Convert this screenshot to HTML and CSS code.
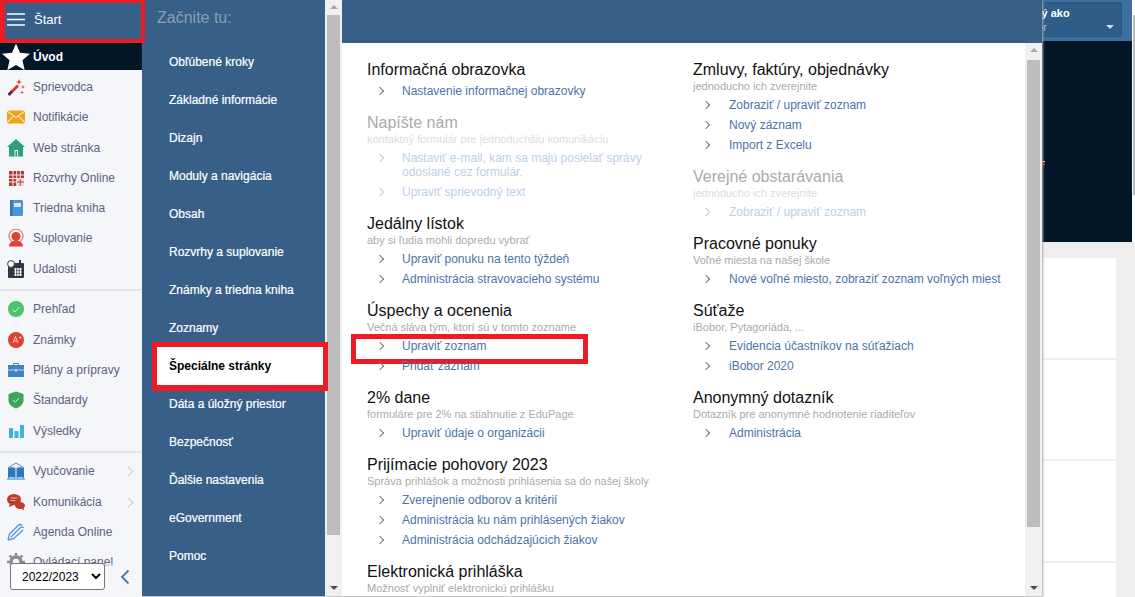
FILE: index.html
```html
<!DOCTYPE html>
<html lang="sk">
<head>
<meta charset="utf-8">
<title>EduPage</title>
<link rel="stylesheet" href="styles.css">
</head>
<body>
<div class="app">
  <aside class="side">
    <div class="side-head annotated-start">
      <svg class="burger" viewBox="0 0 18 13" width="18" height="13"><path d="M0 1h18M0 6.500h18M0 12h18" stroke="#fff" stroke-width="1.600"/></svg>
      <span>Štart</span>
    </div>
    <div class="intro">
      <svg viewBox="0 0 28 28" width="28" height="28"><path d="M14 .5l4 9.300 10 .9-7.600 6.600 2.300 9.800L14 22l-8.700 5.100 2.300-9.800L0 10.700l10-.9z" fill="#fff"/></svg>
      <span>Úvod</span>
    </div>
    <ul class="side-list">
      <li><svg viewBox="0 0 18 18"><path d="M2 16.500L11 7.500" stroke="#d8392b" stroke-width="3"/><path d="M1.500 17L5 13.500" stroke="#3a3a44" stroke-width="2.500"/><path d="M12 1l.8 2.200L15 4l-2.200.8L12 7l-.8-2.200L9 4l2.200-.8zM16 7l.5 1.500 1.500.5-1.500.5L16 11l-.5-1.500L14 9l1.500-.5zM15 12.500l.5 1.500 1.500.5-1.500.5-.5 1.500-.5-1.500-1.500-.5 1.500-.5z" fill="#d8392b"/></svg><span>Sprievodca</span></li>
      <li><svg viewBox="0 0 18 18"><rect y="2.500" width="18" height="13" fill="#f1a31c"/><path d="M0 3l9 6.500L18 3M0 15l6.500-7M18 15l-6.500-7" stroke="#fff" stroke-width="1" fill="none"/></svg><span>Notifikácie</span></li>
      <li><svg viewBox="0 0 18 18"><path d="M9 0L18 8h-2v9.500H2V8H0z" fill="#2f9d80"/><path d="M7.500 11h3.500v6.500H7.500z" fill="#e8f3f0"/><path d="M8.500 12h1.500v5.500H8.500z" fill="#2f9d80"/></svg><span>Web stránka</span></li>
      <li><svg viewBox="0 0 18 18"><rect x="2" y="2" width="15" height="15" fill="#b8352a"/><path d="M2 6h15M2 9.500h15M2 13h15M6 2v15M9.700 2v15M13.300 2v15" stroke="#fff" stroke-width=".9"/><rect x="10" y="10" width="7" height="7" fill="#f0d7d4"/><path d="M10 13h7M13.300 10v7" stroke="#b8352a" stroke-width=".9"/></svg><span>Rozvrhy Online</span></li>
      <li><svg viewBox="0 0 18 18"><rect x="3" y="1" width="13" height="16" rx="1.500" fill="#4a94dc"/><rect x="3" y="1" width="2.500" height="16" fill="#2f78bd"/><rect x="7" y="4" width="7" height="4" fill="#d9eafa"/></svg><span>Triedna kniha</span></li>
      <li><svg viewBox="0 0 18 18"><circle cx="9" cy="7" r="7" fill="none" stroke="#e0503f" stroke-width="1"/><circle cx="9" cy="7.500" r="4.500" fill="#e0402f"/><path d="M2 17.500c0-4 3-5.500 7-5.500s7 1.500 7 5.500z" fill="#e0402f"/></svg><span>Suplovanie</span></li>
      <li><svg viewBox="0 0 18 18"><rect x="1" y="3" width="16" height="15" rx="1" fill="#2c3644"/><path d="M7 9h8M7 12h8M7 15h8M8.500 8v8M11 8v8M13.500 8v8" stroke="#fff" stroke-width="1"/><circle cx="4" cy="4" r="3.400" fill="#fff" stroke="#2c3644"/><rect x="12" y="0" width="2" height="4" fill="#2c3644"/></svg><span>Udalosti</span></li>
    </ul>
    <ul class="side-list ruled">
      <li><svg viewBox="0 0 18 18"><circle cx="9" cy="9" r="8" fill="#47c56d"/><path d="M5.500 9.500l2.500 2.500 4.500-5" stroke="#d8f5e0" stroke-width="1" fill="none"/></svg><span>Prehľad</span></li>
      <li><svg viewBox="0 0 18 18"><circle cx="9" cy="9" r="8" fill="#e0402f"/><path d="M6 12l2.500-6.500L11 12M7 10h3M12 6.500h2.500M13.200 5.300v2.400" stroke="#f7c9c3" stroke-width="1" fill="none"/></svg><span>Známky</span></li>
      <li><svg viewBox="0 0 18 18"><rect x="1" y="4" width="16" height="12" fill="#3d85c6"/><path d="M6.500 4V2.500h5V4" stroke="#3d85c6" fill="none"/><path d="M1 9h16" stroke="#dcebf8" stroke-width=".8"/><rect x="8" y="8.500" width="2" height="2" fill="#dcebf8"/></svg><span>Plány a prípravy</span></li>
      <li><svg viewBox="0 0 18 18"><path d="M9 .5l7.500 2.500v6c0 4-3 7-7.500 8.500C4.500 16 1.500 13 1.500 9V3z" fill="#3ea457"/><path d="M6 9l2.200 2.200L12 7" stroke="#d6f0dc" stroke-width="1" fill="none"/></svg><span>Štandardy</span></li>
      <li><svg viewBox="0 0 18 18"><path d="M2 6h4v10H2zM7.500 9h4v7h-4zM13 3h4v13h-4z" fill="#3db5d8"/></svg><span>Výsledky</span></li>
    </ul>
    <ul class="side-list ruled">
      <li class="more"><svg viewBox="0 0 18 18"><path d="M1 6L9 1l8 5" stroke="#3d85c6" fill="none"/><path d="M1 6c2.500-1 5-1 7.500 0v10c-2.500-1-5-1-7.500 0zM9.500 6c2.500-1 5-1 7.500 0v10c-2.500-1-5-1-7.500 0z" fill="#2f78bd"/><path d="M0 17h18" stroke="#2f78bd"/></svg><span>Vyučovanie</span></li>
      <li class="more"><svg viewBox="0 0 18 18"><ellipse cx="7" cy="6.500" rx="7" ry="5.500" fill="#c0392b"/><path d="M3 10l-1 4 5-2z" fill="#c0392b"/><path d="M3.500 5h7M3.500 7.500h5" stroke="#f5d4d0" stroke-width=".8"/><ellipse cx="13" cy="12.500" rx="5" ry="3.500" fill="#c0392b"/><path d="M14 15l3 2.500-.5-4z" fill="#c0392b"/></svg><span>Komunikácia</span></li>
      <li><svg viewBox="0 0 18 18"><path d="M1 17l1.500-6L11 2.500c1.500-1.500 3-1 4 0M4 14L13 5c1.500-1.500 3-1 3.500 0M1 17l6-1.500L16 7" stroke="#4a94dc" stroke-width="1.300" fill="none"/></svg><span>Agenda Online</span></li>
      <li><svg viewBox="0 0 18 18"><circle cx="9" cy="9" r="5" fill="none" stroke="#8c8c8c" stroke-width="3.500"/><path d="M9 0v3M9 15v3M0 9h3M15 9h3M2.600 2.600l2.100 2.100M13.300 13.300l2.100 2.100M15.400 2.600l-2.100 2.100M4.700 13.300l-2.100 2.100" stroke="#8c8c8c" stroke-width="2.500"/></svg><span>Ovládací panel</span></li>
    </ul>
    <div class="year-bar">
      <select class="year"><option>2022/2023</option></select>
      <svg viewBox="0 0 10 16" width="10" height="16"><path d="M8.500 1.500L2 8l6.500 6.500" stroke="#4a78a5" stroke-width="1.800" fill="none"/></svg>
    </div>
  </aside>

  <main class="page">
    <div class="hero">
      <div class="topbar">
        <div class="user">
          <div class="user-name">Prihlásený ako</div>
          <div class="user-role"><span>Administrátor</span><i class="caret"></i></div>
        </div>
      </div>
      <div class="banner"><span class="banner-mark"></span></div>
    </div>
    <div class="cards">
      <div class="card"></div>
      <div class="card"></div>
      <div class="card"></div>
      <div class="card"></div>
    </div>
  </main>

  <div class="menu">
    <nav class="menu-nav">
      <div class="nav-body">
        <div class="nav-title">Začnite tu:</div>
        <ul class="nav-list">
          <li>Obľúbené kroky</li>
          <li>Základné informácie</li>
          <li>Dizajn</li>
          <li>Moduly a navigácia</li>
          <li>Obsah</li>
          <li>Rozvrhy a suplovanie</li>
          <li>Známky a triedna kniha</li>
          <li>Zoznamy</li>
          <li class="current">Špeciálne stránky</li>
          <li>Dáta a úložný priestor</li>
          <li>Bezpečnosť</li>
          <li>Ďalšie nastavenia</li>
          <li>eGovernment</li>
          <li>Pomoc</li>
        </ul>
      </div>
      <div class="sb sb-nav"><i class="up"></i><b></b><i class="down"></i></div>
    </nav>
    <div class="menu-main">
      <div class="menu-top"></div>
      <div class="menu-body">
        <div class="columns">
          <div class="col">
            <section><h3>Informačná obrazovka</h3><ul><li>Nastavenie informačnej obrazovky</li></ul></section>
            <section class="off"><h3>Napíšte nám</h3><p>kontaktný formulár pre jednoduchšiu komunikáciu</p><ul><li>Nastaviť e-mail, kam sa majú posielať správy odoslané cez formulár.</li><li>Upraviť sprievodný text</li></ul></section>
            <section><h3>Jedálny lístok</h3><p>aby si ľudia mohli dopredu vybrať</p><ul><li>Upraviť ponuku na tento týždeň</li><li>Administrácia stravovacieho systému</li></ul></section>
            <section><h3>Úspechy a ocenenia</h3><p>Večná sláva tým, ktorí sú v tomto zozname</p><ul><li class="annotated-link">Upraviť zoznam</li><li>Pridať záznam</li></ul></section>
            <section><h3>2% dane</h3><p>formuláre pre 2% na stiahnutie z EduPage</p><ul><li>Upraviť údaje o organizácii</li></ul></section>
            <section><h3>Prijímacie pohovory 2023</h3><p>Správa prihlášok a možnosti prihlásenia sa do našej školy</p><ul><li>Zverejnenie odborov a kritérií</li><li>Administrácia ku nám prihlásených žiakov</li><li>Administrácia odchádzajúcich žiakov</li></ul></section>
            <section><h3>Elektronická prihláška</h3><p>Možnosť vyplniť elektronickú prihlášku</p></section>
          </div>
          <div class="col">
            <section><h3>Zmluvy, faktúry, objednávky</h3><p>jednoducho ich zverejnite</p><ul><li>Zobraziť / upraviť zoznam</li><li>Nový záznam</li><li>Import z Excelu</li></ul></section>
            <section class="off"><h3>Verejné obstarávania</h3><p>jednoducho ich zverejnite</p><ul><li>Zobraziť / upraviť zoznam</li></ul></section>
            <section><h3>Pracovné ponuky</h3><p>Voľné miesta na našej škole</p><ul><li>Nové voľné miesto, zobraziť zoznam voľných miest</li></ul></section>
            <section><h3>Súťaže</h3><p>iBobor, Pytagoriáda, ...</p><ul><li>Evidencia účastníkov na súťažiach</li><li>iBobor 2020</li></ul></section>
            <section><h3>Anonymný dotazník</h3><p>Dotazník pre anonymné hodnotenie riaditeľov</p><ul><li>Administrácia</li></ul></section>
          </div>
        </div>
        <div class="sb sb-main"><i class="up"></i><b></b><i class="down"></i></div>
      </div>
    </div>
  </div>
</div>
</body>
</html>
```

FILE: styles.css
```css
*, *::before, *::after { box-sizing: border-box; }
html, body { margin: 0; height: 100%; overflow: hidden; }
body { font-family: "Liberation Sans", Arial, sans-serif; font-size: 12px; background: #eee; }
ul { list-style: none; margin: 0; padding: 0; }
.app { position: relative; display: flex; width: 1135px; height: 597px; overflow: hidden; }

/* left sidebar */
.side { position: relative; flex: 0 0 142px; height: 597px; background: #f5f6fa; }
.side-head { display: flex; align-items: center; gap: 9px; height: 43px; padding: 0 0 4px 7px; background: #375f88; color: #fff; font-size: 13px; }
.annotated-start::after { content: ""; position: absolute; left: 0; top: 0; width: 145px; height: 43px; border: solid #ed1c24; border-width: 3px 4px 4px 5px; z-index: 6; }
.intro { display: flex; align-items: center; height: 27px; padding-left: 2px; background: #021626; color: #fff; font-weight: bold; overflow: hidden; }
.intro svg { margin-right: 3px; flex: none; }
.side-list { padding: 1.700px 0 5.300px; }
.side-list li { position: relative; display: flex; align-items: center; height: 30.330px; padding-left: 7px; color: #5d6180; }
.side-list svg { flex: none; width: 18px; height: 18px; margin-right: 8px; }
.ruled { border-top: 2px solid #e3e4e8; padding-top: 3px; }
.more::after { content: ""; position: absolute; left: 125px; top: 12px; width: 7px; height: 7px; border: solid #c8c9cf; border-width: 1px 1px 0 0; transform: rotate(45deg); }
.year-bar { position: absolute; left: 0; bottom: 0; width: 142px; height: 34px; padding: 0 0 7px 10px; display: flex; align-items: center; gap: 15px; background: linear-gradient(#f5f6fa00, #f5f6fa 4px); }
.year { width: 95px; height: 27px; flex: none; font: 12px "Liberation Sans", Arial, sans-serif; color: #000; background: #fff; border: 1px solid #767676; border-radius: 3px; padding-left: 7px; }

/* page behind the menu */
.page { flex: 1; min-width: 0; background: #eee; }
.hero { position: relative; height: 242px; padding-right: 3px; background: #fff; }
.hero::after { content: ""; position: absolute; right: 0; top: 15px; width: 2px; height: 180px; background: #bbb; }
.topbar { display: flex; justify-content: flex-end; height: 41px; padding: 2px 10px 0 0; background: #3d6fa0; }
.user { width: 130px; height: 35px; padding: 4px 0 0 24px; background: #2f5d8a; border: 1px solid #2a5480; border-radius: 2px; font-size: 11px; text-align: left; }
.user-name { color: #fff; font-weight: bold; white-space: nowrap; margin-left: -25px; }
.user-role { display: flex; align-items: center; justify-content: space-between; padding-right: 7px; margin-left: -35px; margin-top: 2px; color: #9dbde0; white-space: nowrap; }
.caret { width: 0; height: 0; border: solid transparent; border-width: 4px 4px 0; border-top-color: #d5dde6; }
.banner { position: relative; height: 201px; background: #021626; }
.banner-mark { position: absolute; left: 900px; top: 120px; width: 3px; height: 5px; background: #8a1a20; border-top: 1px solid #e8c9a0; }
.cards { width: 974px; margin-top: 16px; }
.card { height: 101.500px; background: #fff; border-bottom: 2px solid #eee; }

/* mega menu */
.menu { position: absolute; left: 142px; top: 0; z-index: 4; display: flex; width: 900px; height: 596px; box-shadow: 1px 1px 2px #aaa; }
.menu-nav { position: relative; flex: 0 0 200px; display: flex; background: #375f88; }
.nav-body { flex: 1; min-width: 0; padding-left: 15px; }
.nav-title { height: 43px; padding-top: 9px; font-size: 16px; line-height: 18px; color: #8a9fb8; }
.nav-list li { position: relative; height: 38px; margin-left: -15px; padding-left: 27px; line-height: 38px; color: #fff; white-space: nowrap; -webkit-text-stroke: .2px #fff; }
.nav-list .current { color: #000; margin: 0 2px 0 0; padding-left: 12px; background: #fff; font-weight: bold; -webkit-text-stroke: 0; }
.nav-list .current::after { content: ""; position: absolute; left: -5px; right: -5px; top: -5px; bottom: -6px; border: solid #ed1c24; border-width: 5px 5px 6px; z-index: 3; }
.sb { position: relative; flex: 0 0 17px; background: #f0f0f0; }
.sb b { position: absolute; left: 2px; width: 13px; background: #bdbdbd; }
.sb i { position: absolute; left: 5px; width: 0; height: 0; border: solid transparent; border-width: 0 4px; }
.sb .up { top: 5px; border-bottom: 4px solid #a8a8a8; }
.sb .down { bottom: 6px; border-top: 4px solid #505050; }
.sb-nav b { top: 15px; height: 520px; }
.sb-main b { top: 17px; height: 467px; }

.menu-main { flex: 1; min-width: 0; display: flex; flex-direction: column; background: #fff; }
.menu-top { height: 43px; background: #375f88; }
.menu-body { flex: 1; min-height: 0; display: flex; }
.columns { flex: 1; min-width: 0; display: flex; padding: 17px 0 0 25px; overflow: hidden; }
.col { flex: 0 0 326px; }
.col + .col { flex-basis: 332px; }
section { margin-bottom: 12px; }
h3 { margin: 0; font-size: 16px; font-weight: normal; line-height: 20px; color: #111; white-space: nowrap; }
section p { margin: 0 0 3px; font-size: 11px; font-weight: normal; line-height: 12px; color: #aaa; white-space: nowrap; }
section ul { margin-top: 1px; }
section li { position: relative; padding: 3px 20px 3px 35px; line-height: 14px; color: #4a74a8; }
.col + .col li { padding-left: 36px; }
section li::before { content: ""; position: absolute; left: 10px; top: 7px; width: 6px; height: 6px; border: solid #777; border-width: 1px 1px 0 0; transform: rotate(45deg); }
.off h3 { color: #aaa; }
.off p { color: #ddd; }
.off li { color: #bcd0e6; }
.off li::before { border-color: #ccc; }
.annotated-link::after { content: ""; position: absolute; left: -16px; width: 237px; top: -2px; height: 30px; border: 5px solid #ed1c24; }
```
